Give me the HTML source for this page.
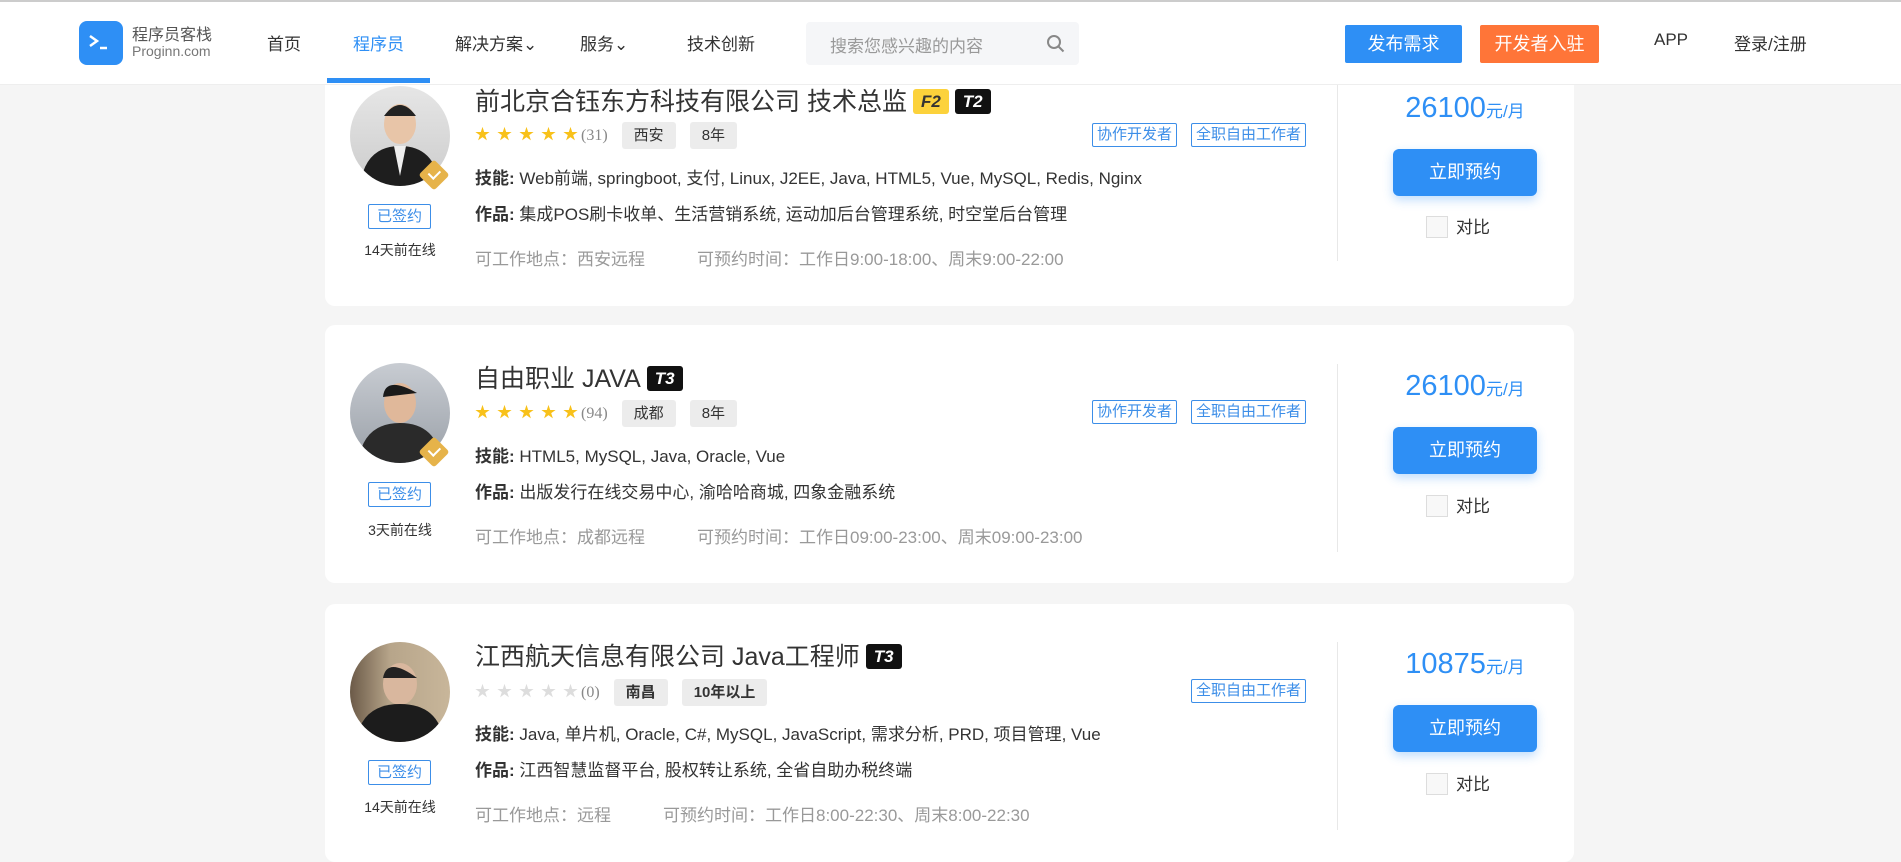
<!DOCTYPE html>
<html><head><meta charset="utf-8">
<style>
*{margin:0;padding:0;box-sizing:border-box}
body{width:1901px;height:859px;overflow:hidden;background:#f5f5f5;font-family:"Liberation Sans","Noto Sans CJK SC",sans-serif;color:#333;position:relative}
.hdr{position:absolute;left:0;top:0;width:1901px;height:85px;background:#fff;border-top:2px solid #ccc;border-bottom:1px solid #eee;z-index:5}
.abs{position:absolute;white-space:nowrap}
.logo{left:79px;top:19px;width:44px;height:44px;background:#2e8ff5;border-radius:8px}
.nav{font-size:17px;color:#333;top:28px}
.search{left:806px;top:20px;width:273px;height:43px;background:#f5f6f8;border-radius:4px}
.btn{top:23px;height:38px;color:#fff;font-size:18px;text-align:center;line-height:38px;border-radius:2px}
.card{position:absolute;left:325px;width:1249px;height:258px;background:#fff;border-radius:10px}
.av{position:absolute;left:25px;width:100px;height:100px;border-radius:50%;overflow:hidden}
.badge{position:absolute;left:98px;width:22px;height:22px;background:#e6b34a;transform:rotate(45deg);border-radius:3px}
.badge:after{content:"";position:absolute;left:6px;top:4px;width:6px;height:9px;border-right:2px solid #fff;border-bottom:2px solid #fff}
.signed{position:absolute;left:43px;width:63px;height:25px;border:1px solid #3c8ee8;color:#3c8ee8;font-size:15px;text-align:center;line-height:23px;border-radius:2px}
.online{position:absolute;left:0;width:150px;text-align:center;font-size:14px;color:#333}
.title{position:absolute;left:150px;font-size:25px;color:#333}
.lv{display:inline-block;height:25px;line-height:25px;padding:0 8px;font-size:17px;font-weight:bold;font-style:italic;border-radius:3px;vertical-align:3px;margin-left:6px}
.row{position:absolute;left:150px;font-size:17px;color:#333}
.row b{font-weight:bold}
.stars{color:#f8c11a;font-size:15px;letter-spacing:7px;vertical-align:1px}
.cnt{color:#888;font-family:"Liberation Serif",serif;font-size:16px;margin-left:-4px}
.gtag{display:inline-block;background:#ececec;color:#333;font-size:15px;height:27px;line-height:27px;padding:0 12px;border-radius:3px;margin-left:14px}
.btag{position:absolute;height:24px;border:1px solid #3c8ee8;color:#3c8ee8;font-size:15px;line-height:22px;padding:0 4px;border-radius:2px}
.loc{position:absolute;left:150px;font-size:17px;color:#999}
.div{position:absolute;left:1012px;width:1px;height:188px;background:#e8e8e8}
.price{position:absolute;left:1040px;width:200px;text-align:center;color:#2e8ff5;font-size:29px}
.price span{font-size:17px}
.book{position:absolute;left:1068px;width:144px;height:47px;background:#2e8ff5;color:#fff;font-size:18px;text-align:center;line-height:47px;border-radius:6px;box-shadow:0 4px 10px rgba(46,143,245,.3)}
.cmp{position:absolute;left:1101px;font-size:17px;color:#333}
.cmp i{display:inline-block;width:22px;height:22px;border:1px solid #ddd;background:#f8f8f8;vertical-align:-5px;margin-right:8px}
</style></head><body>
<div class="hdr">
 <div class="abs logo"><svg width="44" height="44"><path d="M11 15l7 5-7 5" stroke="#fff" stroke-width="2.5" fill="none"/><path d="M21 27h7" stroke="#fff" stroke-width="2.5"/></svg></div>
 <div class="abs" style="left:132px;top:19px;font-size:16px;color:#555">程序员客栈</div>
 <div class="abs" style="left:132px;top:41px;font-size:14px;color:#777">Proginn.com</div>
 <div class="abs nav" style="left:267px">首页</div>
 <div class="abs nav" style="left:353px;color:#2e8ff5">程序员</div>
 <div class="abs" style="left:327px;top:76px;width:103px;height:5px;background:#2e8ff5"></div>
 <div class="abs nav" style="left:455px">解决方案⌄</div>
 <div class="abs nav" style="left:580px">服务⌄</div>
 <div class="abs nav" style="left:687px">技术创新</div>
 <div class="abs search"><span class="abs" style="left:24px;top:10px;font-size:17px;color:#999">搜索您感兴趣的内容</span>
  <svg class="abs" style="left:240px;top:12px" width="20" height="20"><circle cx="8" cy="8" r="6" stroke="#888" stroke-width="2" fill="none"/><path d="M12.5 12.5l5 5" stroke="#888" stroke-width="2"/></svg></div>
 <div class="abs btn" style="left:1345px;width:117px;background:#2e8ff5">发布需求</div>
 <div class="abs btn" style="left:1480px;width:119px;background:#ff7538">开发者入驻</div>
 <div class="abs nav" style="left:1654px">APP</div>
 <div class="abs nav" style="left:1734px">登录/注册</div>
</div>

<!-- card 1 -->
<div class="card" style="top:48px">
 <div class="av" style="top:38px;background:linear-gradient(#e6e6e6,#ccc)"><svg width="100" height="100"><ellipse cx="50" cy="38" rx="16" ry="20" fill="#e8c5a8"/><path d="M34 30q16-22 32 0" fill="#222"/><path d="M10 100q5-40 40-40t40 40z" fill="#1e1e1e"/><path d="M44 60l6 30 6-30z" fill="#eee"/></svg></div>
 <div class="badge" style="top:116px"></div>
 <div class="signed" style="top:156px">已签约</div>
 <div class="online" style="top:192px">14天前在线</div>
 <div class="title" style="top:34px">前北京合钰东方科技有限公司 技术总监<span class="lv" style="background:#fcd23b;color:#333">F2</span><span class="lv" style="background:#111;color:#fff">T2</span></div>
 <div class="row" style="top:74px"><span class="stars">★★★★★</span><span class="cnt">(31)</span><span class="gtag">西安</span><span class="gtag">8年</span></div>
 <div class="btag" style="left:767px;top:75px">协作开发者</div>
 <div class="btag" style="left:866px;top:75px">全职自由工作者</div>
 <div class="row" style="top:116px"><b>技能:</b> Web前端, springboot, 支付, Linux, J2EE, Java, HTML5, Vue, MySQL, Redis, Nginx</div>
 <div class="row" style="top:152px"><b>作品:</b> 集成POS刷卡收单、生活营销系统, 运动加后台管理系统, 时空堂后台管理</div>
 <div class="loc" style="top:197px">可工作地点：西安远程<span style="margin-left:52px">可预约时间：工作日9:00-18:00、周末9:00-22:00</span></div>
 <div class="div" style="top:25px"></div>
 <div class="price" style="top:44px">26100<span>元/月</span></div>
 <div class="book" style="top:101px">立即预约</div>
 <div class="cmp" style="top:165px"><i></i>对比</div>
</div>

<!-- card 2 -->
<div class="card" style="top:325px">
 <div class="av" style="top:38px;background:linear-gradient(#c8ccd2,#9aa0a8)"><svg width="100" height="100"><ellipse cx="50" cy="40" rx="16" ry="20" fill="#e0b89a"/><path d="M33 34q2-22 34-4" fill="#1a1a1a"/><path d="M8 100q5-40 42-40t42 40z" fill="#2a2a2a"/></svg></div>
 <div class="badge" style="top:116px"></div>
 <div class="signed" style="top:157px">已签约</div>
 <div class="online" style="top:195px">3天前在线</div>
 <div class="title" style="top:34px">自由职业 JAVA<span class="lv" style="background:#111;color:#fff">T3</span></div>
 <div class="row" style="top:75px"><span class="stars">★★★★★</span><span class="cnt">(94)</span><span class="gtag">成都</span><span class="gtag">8年</span></div>
 <div class="btag" style="left:767px;top:75px">协作开发者</div>
 <div class="btag" style="left:866px;top:75px">全职自由工作者</div>
 <div class="row" style="top:117px"><b>技能:</b> HTML5, MySQL, Java, Oracle, Vue</div>
 <div class="row" style="top:153px"><b>作品:</b> 出版发行在线交易中心, 渝哈哈商城, 四象金融系统</div>
 <div class="loc" style="top:198px">可工作地点：成都远程<span style="margin-left:52px">可预约时间：工作日09:00-23:00、周末09:00-23:00</span></div>
 <div class="div" style="top:39px"></div>
 <div class="price" style="top:45px">26100<span>元/月</span></div>
 <div class="book" style="top:102px">立即预约</div>
 <div class="cmp" style="top:167px"><i></i>对比</div>
</div>

<!-- card 3 -->
<div class="card" style="top:604px">
 <div class="av" style="top:38px;background:linear-gradient(90deg,#6b5a48,#b7a58a 40%,#c8b69a)"><svg width="100" height="100"><ellipse cx="50" cy="42" rx="17" ry="21" fill="#d9b79e"/><path d="M33 36q4-22 34 0" fill="#222"/><path d="M6 100q5-38 44-38t44 38z" fill="#1c1c1c"/></svg></div>
 <div class="signed" style="top:156px">已签约</div>
 <div class="online" style="top:193px">14天前在线</div>
 <div class="title" style="top:33px">江西航天信息有限公司 Java工程师<span class="lv" style="background:#111;color:#fff">T3</span></div>
 <div class="row" style="top:75px"><span class="stars" style="color:#ddd">★★★★★</span><span class="cnt">(0)</span><span class="gtag" style="font-weight:bold">南昌</span><span class="gtag" style="font-weight:bold">10年以上</span></div>
 <div class="btag" style="left:866px;top:75px">全职自由工作者</div>
 <div class="row" style="top:116px"><b>技能:</b> Java, 单片机, Oracle, C#, MySQL, JavaScript, 需求分析, PRD, 项目管理, Vue</div>
 <div class="row" style="top:152px"><b>作品:</b> 江西智慧监督平台, 股权转让系统, 全省自助办税终端</div>
 <div class="loc" style="top:197px">可工作地点：远程<span style="margin-left:52px">可预约时间：工作日8:00-22:30、周末8:00-22:30</span></div>
 <div class="div" style="top:38px"></div>
 <div class="price" style="top:44px">10875<span>元/月</span></div>
 <div class="book" style="top:101px">立即预约</div>
 <div class="cmp" style="top:166px"><i></i>对比</div>
</div>
</body></html>
